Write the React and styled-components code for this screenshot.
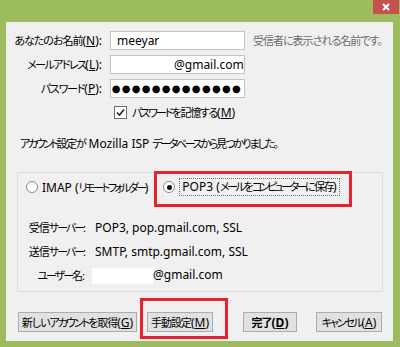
import React from "react";
import styled, { createGlobalStyle } from "styled-components";

const GlobalStyle = createGlobalStyle`
  html, body {
    margin: 0;
    padding: 0;
  }
  body {
    font-family: "Noto Sans", "Noto Sans CJK JP", sans-serif;
    font-size: 12px;
    color: #000;
    font-feature-settings: "palt";
  }
`;

// Japanese runs: Meiryo UI is much narrower than Noto Sans CJK,
// katakana even more so
const J = styled.span`
  font-size: 11px;
  letter-spacing: ${({ $ls }) => ($ls === undefined ? -1 : $ls)}px;
`;

const Frame = styled.div`
  width: 400px;
  height: 347px;
  box-sizing: border-box;
  background: #9cbc5e;
  padding: 0 7px 6px 6px;
  display: flex;
  flex-direction: column;
`;

const TitleBar = styled.div`
  height: 22px;
  display: flex;
  justify-content: flex-end;
  align-items: flex-start;
  margin-right: -6px;
`;

const CloseButton = styled.div`
  width: 26px;
  height: 14px;
  background: #c75050;
  display: flex;
  align-items: center;
  justify-content: center;
`;

const Content = styled.div`
  flex: 1;
  background: #f0f0f0;
  display: flex;
  flex-direction: column;
  white-space: nowrap;
`;

const FormGrid = styled.div`
  margin-top: 9px;
  display: grid;
  grid-template-columns: 96px 135px 1fr;
  grid-auto-rows: 19px;
  column-gap: 8px;
  row-gap: 5px;
  align-items: center;
`;

const Label = styled.label`
  text-align: right;
`;

const Hint = styled.span`
  color: #6d6d6d;
`;

const Field = styled.div`
  height: 19px;
  box-sizing: border-box;
  background: #fff;
  border: 1px solid #c3c3c3;
  display: flex;
  align-items: center;
  justify-content: ${({ $end }) => ($end ? "flex-end" : "flex-start")};
  padding: 0 ${({ $end }) => ($end ? "2px" : "6px")} 0 ${({ $indent }) => $indent || 6}px;
  overflow: hidden;
`;

const Dots = styled.span`
  font-family: "DejaVu Sans", sans-serif;
  font-size: 10px;
  letter-spacing: 1.3px;
  line-height: 1;
`;

const CheckRow = styled.div`
  margin-top: 6px;
  height: 16px;
  padding-left: 108px;
  display: flex;
  align-items: center;
  gap: 5px;
`;

const CheckBox = styled.span`
  width: 13px;
  height: 13px;
  box-sizing: border-box;
  border: 1px solid #707070;
  background: #fff;
  display: flex;
  align-items: center;
  justify-content: center;
`;

const Info = styled.p`
  margin: 16px 0 0 14px;
  line-height: 16px;
`;

const Group = styled.div`
  margin: 20px 10px 0 11px;
  height: 120px;
  box-sizing: border-box;
  border: 1px solid #dcdcdc;
  padding: 5px 0 0 8px;
`;

const RadioRow = styled.div`
  height: 18px;
  display: flex;
  align-items: center;
`;

const RadioOption = styled.span`
  display: flex;
  align-items: center;
  gap: 4px;
  margin-right: ${({ $space }) => $space || 0}px;
`;

const Radio = styled.span`
  width: 12px;
  height: 12px;
  box-sizing: border-box;
  border-radius: 50%;
  border: 1px solid #8a8a8a;
  background: #fff;
  display: flex;
  align-items: center;
  justify-content: center;

  &::after {
    content: "";
    width: 5px;
    height: 5px;
    border-radius: 50%;
    background: ${({ $checked }) => ($checked ? "#111" : "transparent")};
  }
`;

const FocusLabel = styled.span`
  border: 1px dotted #6f6f6f;
  padding: 0 2px;
  line-height: 16px;
`;

const Highlight = styled.span`
  display: inline-flex;
  border: 3px solid #e8232b;
  padding: ${({ $pad }) => $pad};
  margin: ${({ $margin }) => $margin};
`;

const ServerGrid = styled.div`
  margin-top: 23px;
  margin-left: -8px;
  display: grid;
  grid-template-columns: 66px 1fr;
  grid-auto-rows: 16px;
  column-gap: 11px;
  row-gap: 8px;
  align-items: center;
`;

const ServerLabel = styled.span`
  text-align: right;
`;

const Masked = styled.span`
  display: inline-block;
  width: 61px;
  height: 16px;
  margin-left: -3px;
  vertical-align: middle;
  background: #fff;
`;

const ButtonRow = styled.div`
  margin-top: 20px;
  padding-left: 12px;
  display: flex;
  align-items: center;
`;

const Button = styled.button`
  height: 20px;
  width: ${({ $w }) => $w}px;
  margin-left: ${({ $gap }) => $gap || 0}px;
  padding: 0;
  box-sizing: border-box;
  border: 1px solid #adadad;
  background: #e1e1e1;
  font-family: inherit;
  font-size: 12px;
  font-weight: ${({ $bold }) => ($bold ? 700 : 400)};
  color: #000;
  white-space: nowrap;
  font-feature-settings: "palt";
`;

const U = styled.span`
  text-decoration: underline;
`;

export default function App() {
  return (
    <>
      <GlobalStyle />
      <Frame>
        <TitleBar>
          <CloseButton>
            <svg width="8" height="8" viewBox="0 0 8 8">
              <path d="M1 1L7 7M7 1L1 7" stroke="#fff" strokeWidth="2" />
            </svg>
          </CloseButton>
        </TitleBar>
        <Content>
          <FormGrid>
            <Label>
              <J>あなたのお名前</J>(<U>N</U>):
            </Label>
            <Field>meeyar</Field>
            <Hint>
              <J>受信者に表示される名前です。</J>
            </Hint>

            <Label>
              <J $ls={-1.6}>メールアドレス</J>(<U>L</U>):
            </Label>
            <Field $indent={63}>@gmail.com</Field>
            <span />

            <Label>
              <J $ls={-1.2}>パスワード</J>(<U>P</U>):
            </Label>
            <Field $end>
              <Dots>●●●●●●●●●●●●●●●</Dots>
            </Field>
            <span />
          </FormGrid>

          <CheckRow>
            <CheckBox>
              <svg width="9" height="9" viewBox="0 0 9 9">
                <path d="M1 4.5L3.5 7L8 1.5" fill="none" stroke="#222" strokeWidth="1.6" />
              </svg>
            </CheckBox>
            <span>
              <J $ls={-2}>パスワード</J>
              <J $ls={-1.3}>を記憶する</J>(<U>M</U>)
            </span>
          </CheckRow>

          <Info>
            <J $ls={-2.4}>アカウント</J>
            <J $ls={-1.3}>設定が</J> Mozilla ISP <J $ls={-2.4}>データベース</J>
            <J $ls={-2}>から見つかりました。</J>
          </Info>

          <Group>
            <RadioRow>
              <RadioOption $space={15}>
                <Radio />
                <span>
                  IMAP (<J $ls={-2.4}>リモートフォルダー</J>)
                </span>
              </RadioOption>
              <Highlight $pad="4px 9px 8px 6px" $margin="-7px -12px -11px -9px">
                <RadioOption>
                  <Radio $checked />
                  <FocusLabel>
                    POP3 (<J $ls={-2.4}>メール</J>
                    <J $ls={-1.5}>を</J>
                    <J $ls={-2.6}>コンピューター</J>
                    <J $ls={-1.5}>に保存</J>)
                  </FocusLabel>
                </RadioOption>
              </Highlight>
            </RadioRow>

            <ServerGrid>
              <ServerLabel>
                <J>受信</J>
                <J $ls={-2}>サーバー:</J>
              </ServerLabel>
              <span>POP3, pop.gmail.com, SSL</span>
              <ServerLabel>
                <J>送信</J>
                <J $ls={-2}>サーバー:</J>
              </ServerLabel>
              <span>SMTP, smtp.gmail.com, SSL</span>
              <ServerLabel>
                <J $ls={-2}>ユーザー</J>
                <J>名:</J>
              </ServerLabel>
              <span>
                <Masked />
                @gmail.com
              </span>
            </ServerGrid>
          </Group>

          <ButtonRow>
            <Button $w={119}>
              <J>新しい</J>
              <J $ls={-2}>アカウント</J>
              <J>を取得</J>(<U>G</U>)
            </Button>
            <Highlight $pad="11px 12px 4px 4px" $margin="-14px -15px -7px 3px">
              <Button $w={66}>
                <J>手動設定</J>(<U>M</U>)
              </Button>
            </Highlight>
            <Button $w={54} $gap={30} $bold>
              <J>完了</J>(<U>D</U>)
            </Button>
            <Button $w={66} $gap={19}>
              <J $ls={-2}>キャンセル</J>(<U>A</U>)
            </Button>
          </ButtonRow>
        </Content>
      </Frame>
    </>
  );
}
